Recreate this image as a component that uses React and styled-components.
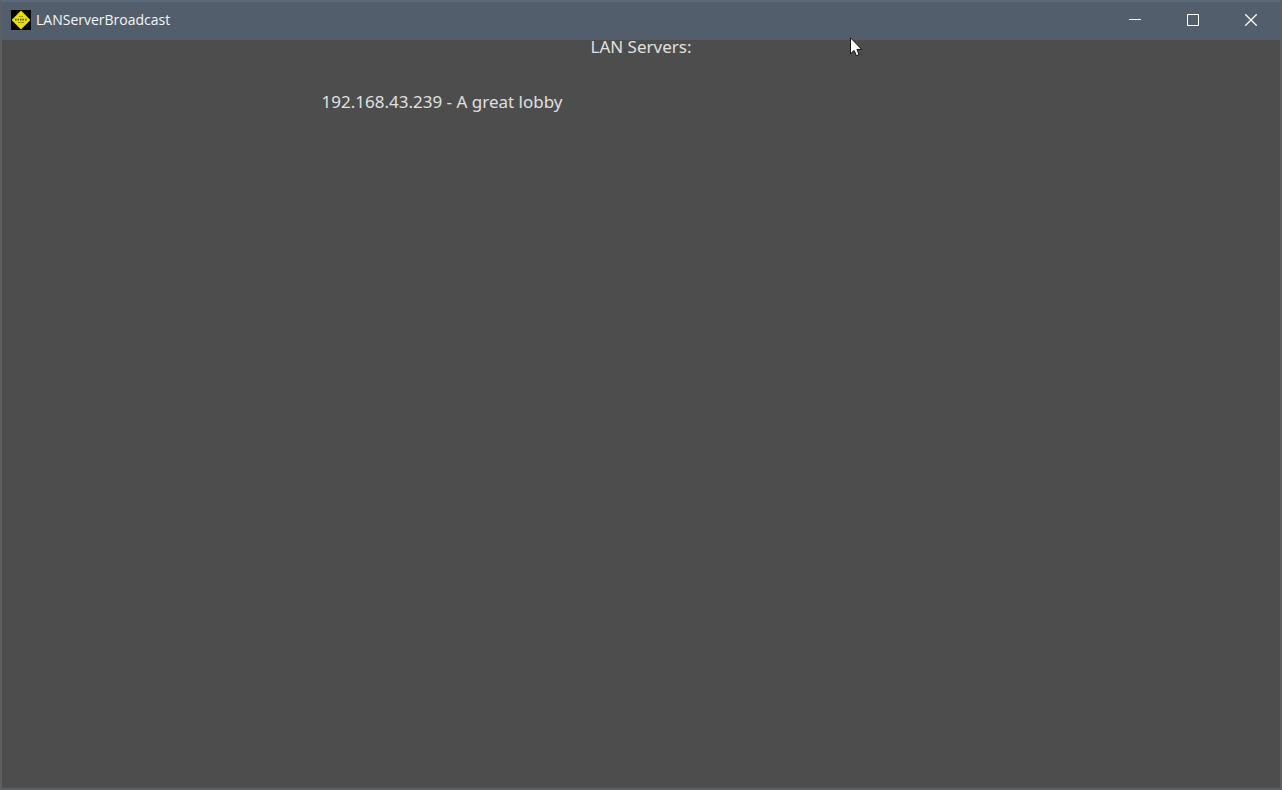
import React, { useState } from 'react'
import styled, { createGlobalStyle } from 'styled-components'

const servers = [
  { ip: '192.168.43.239', name: 'A great lobby' },
]

const AppIcon = () => (
  <svg width="20" height="20" viewBox="0 0 20 20" aria-hidden="true">
    <rect width="20" height="20" fill="#050505" />
    <path d="M10 0.6L19.4 10L10 19.4L0.6 10Z" fill="#eadf08" />
    <path d="M8 6.5h1.5M10.3 6.5h1.7" stroke="#857c06" strokeWidth="1" />
    <path d="M4 9.6h1.6M6.6 9.6h1.4M9 9.6h1.6M11.4 9.6h1.6M14 9.6h1.6" stroke="#5a5405" strokeWidth="1.6" />
    <path d="M7 12.5h2.4M10.2 12.5h2.6" stroke="#857c06" strokeWidth="1" />
  </svg>
)

const Pointer = () => (
  <svg width="12" height="20" viewBox="0 0 12 20" aria-hidden="true">
    <path
      d="M0.5 0.8V16.8L4.1 13.4L6.4 18.7L9.1 17.5L6.9 12.4H11.7Z"
      fill="#fff"
      stroke="#111"
      strokeWidth="1"
    />
  </svg>
)

const App = () => {
  const [lobbies] = useState(servers)

  return (
    <>
      <GlobalStyle />
      <Window>
        <TitleBar>
          <AppIcon />
          <WindowTitle>LANServerBroadcast</WindowTitle>
          <Controls>
            <ControlButton aria-label="Minimize">
              <svg width="12" height="12" viewBox="0 0 12 12">
                <path d="M0 5.5H12" />
              </svg>
            </ControlButton>
            <ControlButton aria-label="Maximize">
              <svg width="12" height="12" viewBox="0 0 12 12">
                <path d="M0.5 0.5H11.5V11.5H0.5Z" />
              </svg>
            </ControlButton>
            <ControlButton aria-label="Close">
              <svg width="12" height="12" viewBox="0 0 12 12">
                <path d="M0.3 0.3L11.7 11.7M11.7 0.3L0.3 11.7" strokeWidth="1.3" />
              </svg>
            </ControlButton>
          </Controls>
        </TitleBar>
        <Content>
          <Heading>LAN Servers:</Heading>
          <ServerList>
            {
              lobbies.map(server => (
                <ServerItem key={server.ip}>{server.ip} - {server.name}</ServerItem>
              ))
            }
          </ServerList>
        </Content>
        <MouseCursor>
          <Pointer />
        </MouseCursor>
      </Window>
    </>
  )
}

const GlobalStyle = createGlobalStyle`
  * {
    box-sizing: border-box;
  }

  body {
    margin: 0;
    background-color: #4d4d4d;
  }
`

const Window = styled.div`
  position: relative;
  display: flex;
  flex-direction: column;
  min-height: 100vh;
  border: 2px solid #5b6065;
  border-top-color: #5a6a79;
  background-color: #4d4d4d;
  font-family: "Noto Sans", "Open Sans", sans-serif;
`

const TitleBar = styled.header`
  display: flex;
  align-items: center;
  height: 38px;
  padding-left: 9px;
  padding-bottom: 2px;
  background-color: #525e6b;
`

const WindowTitle = styled.span`
  margin-left: 5px;
  font-family: "Open Sans", sans-serif;
  font-size: 14px;
  line-height: 20px;
  color: #f4f6f8;
`

const Controls = styled.div`
  display: flex;
  margin-left: auto;
`

const ControlButton = styled.button`
  display: flex;
  align-items: center;
  justify-content: center;
  width: 58px;
  height: 36px;
  padding: 0;
  border: none;
  background: none;

  svg {
    fill: none;
    stroke: #fff;
  }

  &:hover {
    background-color: #66717d;
  }
`

const Content = styled.main`
  flex: 1;
  color: #e0e0e0;
  font-size: 17px;
  line-height: 14px;
`

const Heading = styled.h1`
  margin: 0;
  font-size: inherit;
  font-weight: 400;
  text-align: center;
`

const ServerList = styled.ul`
  width: 50%;
  margin: 41px auto 0;
  padding: 0;
  list-style: none;
`

const ServerItem = styled.li`
  margin-bottom: 12px;
`

const MouseCursor = styled.div`
  position: absolute;
  top: 35px;
  left: 848px;
  pointer-events: none;
`

export default App
